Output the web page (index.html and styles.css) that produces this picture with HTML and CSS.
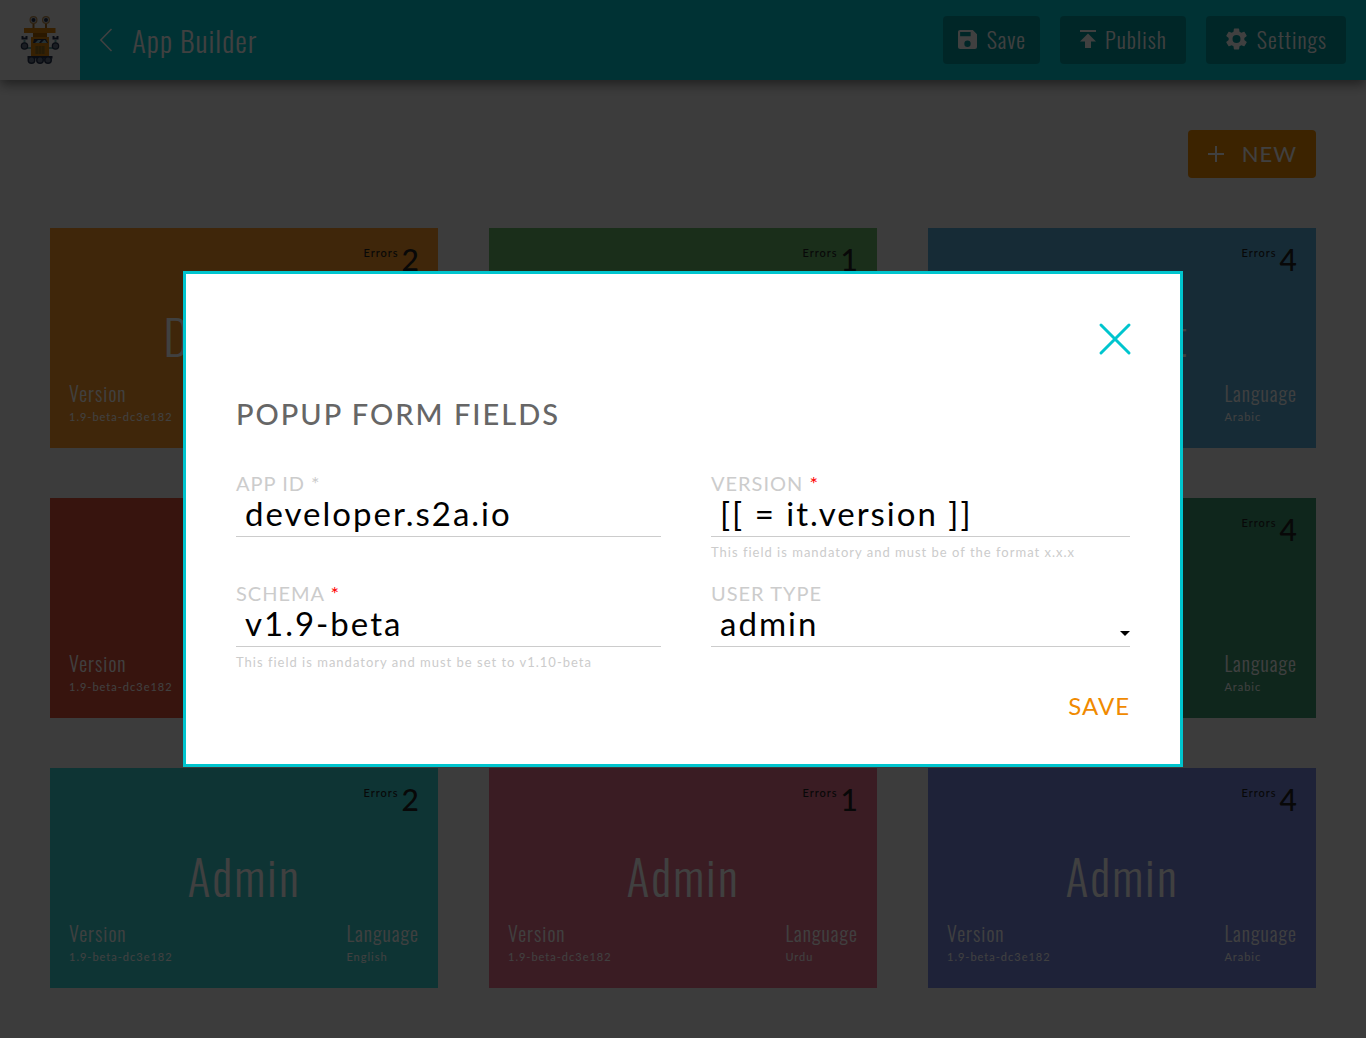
FILE: index.html
```html
<!DOCTYPE html>
<html lang="en">
<head>
<meta charset="utf-8">
<meta name="viewport" content="width=device-width, initial-scale=1">
<title>App Builder</title>
<link rel="stylesheet" href="styles.css">
</head>
<body>
<header class="topbar">
  <a class="logo" href="#" aria-label="Home">
    <svg width="40" height="48" viewBox="0 0 40 48" aria-hidden="true">
      <path d="M13.500 7v6M26 7v6" stroke="#a56a1c" stroke-width="2"/>
      <circle cx="13.500" cy="4" r="4" fill="#b98a4c"/><circle cx="26" cy="4" r="4" fill="#b98a4c"/>
      <circle cx="13.500" cy="4" r="2.800" fill="#c6d0dc"/><circle cx="26" cy="4" r="2.800" fill="#c6d0dc"/>
      <circle cx="13.500" cy="4" r="2" fill="#26334d"/><circle cx="26" cy="4" r="2" fill="#26334d"/>
      <path d="M4 12h31.500v5H4z" fill="#d88008"/>
      <path d="M13 17h14v4H13z" fill="#a86200"/>
      <path d="M6 32h5M29 32h5M4.500 24v4M35.500 24v4" stroke="#6aa5a5" stroke-width="2"/>
      <path d="M11 21h18v19H11z" fill="#d88008"/>
      <path d="M14 23h12l2 4H13z" fill="#26334d"/><path d="M15 27l3-3h3l-2 3zM21 27l3-3h1l2 3z" fill="#8fc0d0"/>
      <path d="M15 30h10v8H15z" fill="#a8791c"/><path d="M17 30v8M20 30v8M23 30v8" stroke="#80601c"/>
      <path d="M2.500 20v2.500h4V20M33.500 20v2.500h4V20" fill="none" stroke="#26334d" stroke-width="2"/>
      <circle cx="4.500" cy="30" r="3.800" fill="#26334d"/><circle cx="35.500" cy="30" r="3.800" fill="#26334d"/>
      <circle cx="4.500" cy="30" r="2.500" fill="#687488"/><circle cx="35.500" cy="30" r="2.500" fill="#687488"/>
      <path d="M7.500 40h25v2.500h-25z" fill="#26334d"/>
      <circle cx="11.500" cy="44" r="4" fill="#26334d"/><circle cx="20" cy="44" r="4" fill="#26334d"/><circle cx="28" cy="44" r="4" fill="#26334d"/>
      <circle cx="11.500" cy="44" r="2.500" fill="#687488"/><circle cx="20" cy="44" r="2.500" fill="#687488"/><circle cx="28" cy="44" r="2.500" fill="#687488"/>
    </svg>
  </a>
  <a class="back" href="#" aria-label="Back"><svg width="12" height="24" viewBox="0 0 12 24" fill="none" stroke="currentColor" stroke-width="1.500" aria-hidden="true"><path d="M11.500 1L.8 12l10.700 11"/></svg></a>
  <h1 class="title">App Builder</h1>
  <nav class="actions">
    <button class="action action-save" type="button"><svg width="19" height="19" viewBox="3 3 18 18" fill="currentColor" aria-hidden="true"><path d="M17 3H5a2 2 0 0 0-2 2v14a2 2 0 0 0 2 2h14a2 2 0 0 0 2-2V7l-4-4zm-5 16a3 3 0 1 1 0-6 3 3 0 0 1 0 6zm3-10H5V5h10v4z"/></svg>Save</button>
    <button class="action" type="button"><svg width="16" height="18" viewBox="4 3 16 18" fill="currentColor" aria-hidden="true"><path d="M4 3h16v2H4zM12 6.500l8 8h-5V21H9v-6.500H4z"/></svg>Publish</button>
    <button class="action" type="button"><svg width="21" height="22" viewBox="2 2 20 20" fill="currentColor" aria-hidden="true"><path d="M19.430 12.980c.04-.32.070-.64.070-.98s-.03-.66-.07-.98l2.110-1.650c.19-.15.240-.42.120-.64l-2-3.460c-.12-.22-.39-.3-.61-.22l-2.490 1c-.52-.4-1.080-.73-1.690-.98l-.38-2.650C14.460 2.180 14.250 2 14 2h-4c-.25 0-.46.180-.49.420l-.38 2.650c-.61.250-1.170.590-1.690.980l-2.490-1c-.23-.09-.49 0-.61.220l-2 3.460c-.13.220-.07.490.120.640l2.110 1.650c-.04.320-.07.650-.07.980s.03.660.070.980l-2.110 1.650c-.19.150-.24.420-.12.640l2 3.460c.12.220.390.300.610.220l2.490-1c.52.400 1.080.730 1.690.980l.38 2.650c.03.240.240.420.490.420h4c.25 0 .460-.18.490-.42l.38-2.650c.61-.25 1.170-.59 1.690-.98l2.490 1c.23.090.490 0 .610-.22l2-3.460c.12-.22.070-.49-.12-.64l-2.110-1.650zM12 15.800a3.800 3.800 0 1 1 0-7.600 3.800 3.800 0 0 1 0 7.600z"/></svg>Settings</button>
  </nav>
</header>

<main class="page">
  <div class="toolbar">
    <button class="new" type="button"><svg width="16" height="16" viewBox="0 0 16 16" stroke="currentColor" stroke-width="2" aria-hidden="true"><path d="M8 0v16M0 8h16"/></svg>NEW</button>
  </div>
  <div class="cards">
    <article class="card orange"><p class="errors">Errors <b>2</b></p><h2>Designer</h2><dl><div><dt>Version</dt><dd>1.9-beta-dc3e182</dd></div><div><dt>Language</dt><dd>English</dd></div></dl></article>
    <article class="card green"><p class="errors">Errors <b>1</b></p><h2>Admin</h2><dl><div><dt>Version</dt><dd>1.9-beta-dc3e182</dd></div><div><dt>Language</dt><dd>Urdu</dd></div></dl></article>
    <article class="card blue"><p class="errors">Errors <b>4</b></p><h2>Analyst</h2><dl><div><dt>Version</dt><dd>1.9-beta-dc3e182</dd></div><div><dt>Language</dt><dd>Arabic</dd></div></dl></article>
    <article class="card red"><p class="errors">Errors <b>2</b></p><h2>Admin</h2><dl><div><dt>Version</dt><dd>1.9-beta-dc3e182</dd></div><div><dt>Language</dt><dd>English</dd></div></dl></article>
    <article class="card violet"><p class="errors">Errors <b>1</b></p><h2>Admin</h2><dl><div><dt>Version</dt><dd>1.9-beta-dc3e182</dd></div><div><dt>Language</dt><dd>Urdu</dd></div></dl></article>
    <article class="card forest"><p class="errors">Errors <b>4</b></p><h2>Admin</h2><dl><div><dt>Version</dt><dd>1.9-beta-dc3e182</dd></div><div><dt>Language</dt><dd>Arabic</dd></div></dl></article>
    <article class="card teal"><p class="errors">Errors <b>2</b></p><h2>Admin</h2><dl><div><dt>Version</dt><dd>1.9-beta-dc3e182</dd></div><div><dt>Language</dt><dd>English</dd></div></dl></article>
    <article class="card pink"><p class="errors">Errors <b>1</b></p><h2>Admin</h2><dl><div><dt>Version</dt><dd>1.9-beta-dc3e182</dd></div><div><dt>Language</dt><dd>Urdu</dd></div></dl></article>
    <article class="card indigo"><p class="errors">Errors <b>4</b></p><h2>Admin</h2><dl><div><dt>Version</dt><dd>1.9-beta-dc3e182</dd></div><div><dt>Language</dt><dd>Arabic</dd></div></dl></article>
  </div>
</main>

<div class="overlay">
  <form class="modal" role="dialog" aria-modal="true" aria-labelledby="popup-title">
    <button class="close" type="button" aria-label="Close"><svg width="30" height="30" viewBox="0 0 30 30" stroke="currentColor" stroke-width="3" stroke-linecap="round" aria-hidden="true"><path d="M1 1l28 28M29 1L1 29"/></svg></button>
    <h2 class="modal-title" id="popup-title">POPUP FORM FIELDS</h2>
    <div class="fields">
      <div class="field">
        <label for="app-id">APP ID *</label>
        <input id="app-id" type="text" value="developer.s2a.io">
      </div>
      <div class="field">
        <label for="version">VERSION <span class="required">*</span></label>
        <input id="version" type="text" value="[[ = it.version ]]">
        <p class="hint">This field is mandatory and must be of the format x.x.x</p>
      </div>
      <div class="field">
        <label for="schema">SCHEMA <span class="required">*</span></label>
        <input id="schema" type="text" value="v1.9-beta">
        <p class="hint">This field is mandatory and must be set to v1.10-beta</p>
      </div>
      <div class="field">
        <label for="user-type">USER TYPE</label>
        <div class="select">
          <select id="user-type"><option>admin</option><option>developer</option></select>
          <svg width="10" height="5" viewBox="0 0 10 5" aria-hidden="true"><path d="M0 0h10L5 5z"/></svg>
        </div>
      </div>
    </div>
    <button class="submit" type="button">SAVE</button>
  </form>
</div>
</body>
</html>
```
FILE: styles.css
```css
* { box-sizing: border-box; margin: 0; }
body { background: #f0f0f0; font-family: Lato, sans-serif; letter-spacing: 1px; }
button, input, select { font: inherit; letter-spacing: inherit; color: inherit; border: 0; padding: 0; background: none; border-radius: 0; }
svg { display: block; flex: none; overflow: visible; }

.topbar { display: flex; align-items: center; height: 80px; padding-right: 20px; background: #00c8d0; color: #fff; font-family: Oswald, "Liberation Sans Narrow", sans-serif; font-weight: 300; box-shadow: 0 4px 12px rgba(0, 0, 0, .5); }
.logo { display: grid; place-items: center; width: 80px; height: 80px; background: #f0f0f0; }
.back { margin: 0 20px; color: #fff; }
.title { padding-bottom: 2px; font-size: 29px; font-weight: 300; }
.actions { display: flex; gap: 20px; margin-left: auto; }
.action { display: flex; align-items: center; gap: 9px; height: 48px; padding: 0 19px 2px 20px; border-radius: 4px; background: #00989c; font-size: 22px; }
.action:last-child { gap: 10px; }
.action-save { gap: 10px; padding: 0 14px 2px 15px; }

.page { padding: 50px; }
.toolbar { display: flex; justify-content: flex-end; margin-bottom: 50px; }
.new { display: flex; align-items: center; gap: 18px; height: 48px; padding: 0 19px 1px 20px; border-radius: 4px; background: #f08a00; color: #fff; font-size: 22px; }
.cards { display: grid; grid-template-columns: repeat(3, 1fr); gap: 50px 51px; }
.card { display: flex; flex-direction: column; height: 220px; padding: 12px 19px 22px; color: #fff; }
.card h2 { flex: 1; padding-top: 16px; text-align: center; font: 300 48px/84px Oswald, "Liberation Sans Narrow", sans-serif; letter-spacing: 2px; }
.errors { display: flex; justify-content: flex-end; gap: 3px; color: #222; font: 500 11px/26px "Lato Medium", Lato, sans-serif; }
.errors b { font-size: 30px; font-weight: 500; line-height: 38px; letter-spacing: 0; }
.card dl { display: flex; justify-content: space-between; }
.card dt { font: 300 20px/30px Oswald, "Liberation Sans Narrow", sans-serif; }
.card dd { font-size: 11px; line-height: 18px; }
.orange { background: #fc9828; }
.green { background: #68b86a; }
.blue { background: #58acd8; }
.red { background: #dc5038; }
.violet { background: #9060c0; }
.forest { background: #3c9870; }
.teal { background: #38d0d0; }
.pink { background: #e8708c; }
.indigo { background: #7888e0; }

.overlay { position: fixed; inset: 0; display: grid; place-items: center; background: rgba(0, 0, 0, .75); }
.modal { display: flex; flex-direction: column; width: 1000px; max-width: 90%; padding: 50px 50px 43px; border: 3px solid #00c5ce; background: #fff; }
.close { align-self: flex-end; color: #00c5ce; }
.modal-title { margin: 40px 0 37px; color: #666; font: 500 29px/40px "Lato Medium", Lato, sans-serif; letter-spacing: 2px; }
.fields { display: grid; grid-template-columns: 425fr 419fr; column-gap: 50px; }
.field { height: 110px; }
.field label { display: block; color: #ccc; font-size: 20px; line-height: 24px; }
.required { color: red; }
.field input, .field select { display: block; width: 100%; height: 42px; padding: 0 9px 5px; border-bottom: 1px solid #ccc; color: #000; font-size: 33px; line-height: 36px; letter-spacing: 2px; appearance: none; }
.select { position: relative; }
.select svg { position: absolute; right: 0; bottom: 11px; pointer-events: none; }
.hint { color: #ccc; font-size: 13px; line-height: 30px; }
.submit { align-self: flex-end; color: #f08a00; font-size: 24px; line-height: 30px; }
```
